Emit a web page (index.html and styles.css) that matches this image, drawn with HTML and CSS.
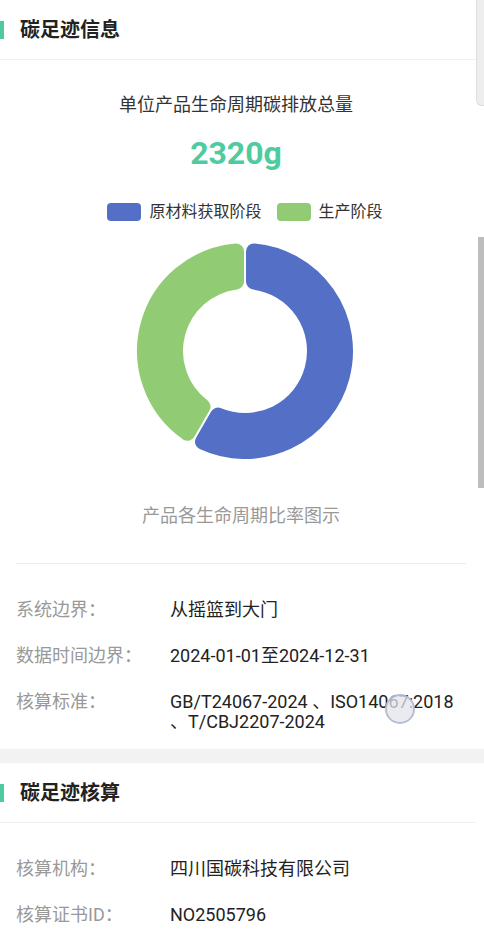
FILE: index.html
```html
<!DOCTYPE html>
<html lang="zh-CN">
<head>
<meta charset="utf-8">
<title>碳足迹信息</title>
<link rel="stylesheet" href="styles.css">
</head>
<body>
<div class="page">
  <section class="card">
    <div class="card-head"><span class="head-bar"></span><h2 class="head-title">碳足迹信息</h2></div>
    <div class="summary">
      <div class="summary-label">单位产品生命周期碳排放总量</div>
      <div class="summary-value">2320g</div>
      <div class="legend">
        <span class="legend-item"><span class="legend-swatch swatch-blue"></span>原材料获取阶段</span>
        <span class="legend-item"><span class="legend-swatch swatch-green"></span>生产阶段</span>
      </div>
      <div class="chart">
        <svg class="donut" width="220" height="220" viewBox="0 0 220 220">
          <path class="seg-blue" d="M118.99,10.41 A100,100 0 1 1 67.99,200.75 L83.08,174.62 A70,70 0 1 0 119.00,40.58 Z"/>
          <path class="seg-green" d="M52.41,191.75 A100,100 0 0 1 101.01,10.41 L101.00,40.58 A70,70 0 0 0 67.49,165.62 Z"/>
        </svg>
      </div>
      <div class="chart-caption">产品各生命周期比率图示</div>
    </div>
    <div class="info-list info-list-first">
      <div class="info-row"><span class="info-label">系统边界：</span><span class="info-value">从摇篮到大门</span></div>
      <div class="info-row"><span class="info-label">数据时间边界：</span><span class="info-value">2024-01-01至2024-12-31</span></div>
      <div class="info-row"><span class="info-label">核算标准：</span><span class="info-value">GB/T24067-2024 、ISO14067:2018<br>、T/CBJ2207-2024</span></div>
    </div>
  </section>
  <div class="band"></div>
  <section class="card">
    <div class="card-head"><span class="head-bar"></span><h2 class="head-title">碳足迹核算</h2></div>
    <div class="info-list info-list-second">
      <div class="info-row"><span class="info-label">核算机构：</span><span class="info-value">四川国碳科技有限公司</span></div>
      <div class="info-row"><span class="info-label">核算证书ID：</span><span class="info-value">NO2505796</span></div>
    </div>
  </section>
  <div class="scroll-track-top"></div>
  <div class="scroll-thumb"></div>
  <div class="touch-dot"></div>
</div>
</body>
</html>
```
FILE: styles.css
```css
html, body {
  margin: 0;
  padding: 0;
  background: #ffffff;
}
body {
  font-family: Roboto, "Noto Sans CJK SC", "Noto Sans", sans-serif;
  color: #222222;
  width: 484px;
  height: 949px;
  overflow: hidden;
}
.page {
  position: relative;
  width: 484px;
}
.card {
  background: #ffffff;
  width: 476px;
}
.card-head {
  height: 59px;
  display: flex;
  align-items: center;
  border-bottom: 1px solid #f0f0f0;
}
.head-bar {
  width: 4px;
  height: 18px;
  background: #4ec9a2;
  margin-right: 16px;
}
.head-title {
  margin: 0;
  font-size: 20px;
  font-weight: 700;
  color: #222222;
  line-height: 26px;
}
.summary {
  display: flex;
  flex-direction: column;
  align-items: center;
  padding-top: 32px;
}
.summary-label {
  font-size: 18px;
  line-height: 26px;
  color: #333333;
  margin-left: -4px;
}
.summary-value {
  font-size: 32px;
  font-weight: 700;
  line-height: 40px;
  color: #4ecb9f;
  margin-top: 15px;
  margin-left: -4px;
}
.legend {
  display: flex;
  gap: 15px;
  margin-top: 28px;
  margin-left: 14px;
  font-size: 16px;
  line-height: 22px;
  color: #333333;
}
.legend-item {
  display: flex;
  align-items: center;
  gap: 8px;
}
.legend-swatch {
  width: 34px;
  height: 18px;
  border-radius: 4px;
}
.swatch-blue { background: #5470c6; }
.swatch-green { background: #91cc75; }
.chart {
  margin-top: 18px;
  margin-left: 14px;
  width: 220px;
  height: 220px;
}
.donut { display: block; }
.seg-blue {
  fill: #5470c6;
  stroke: #5470c6;
  stroke-width: 16;
  stroke-linejoin: round;
}
.seg-green {
  fill: #91cc75;
  stroke: #91cc75;
  stroke-width: 16;
  stroke-linejoin: round;
}
.chart-caption {
  margin-top: 42px;
  font-size: 18px;
  line-height: 26px;
  color: #999999;
  margin-left: 6px;
}
.info-list {
  margin: 0 10px 0 16px;
  border-top: 1px solid #ececec;
  padding-top: 23px;
  padding-bottom: 4px;
}
.info-list-first {
  margin-top: 34px;
}
.info-list-second {
  border-top: none;
}
.info-row {
  display: flex;
  padding: 13px 0;
  font-size: 18px;
  line-height: 20px;
}
.info-label {
  width: 154px;
  flex: none;
  color: #999999;
}
.info-value {
  color: #222222;
}
.band {
  height: 14px;
  background: #f2f2f2;
}
.scroll-track-top {
  position: absolute;
  top: 0;
  right: 0;
  width: 7px;
  height: 105px;
  background: #eeeeee;
  border-left: 1px solid #dddddd;
  border-bottom: 1px solid #dddddd;
  border-bottom-left-radius: 6px;
}
.scroll-thumb {
  position: absolute;
  top: 237px;
  right: 0;
  width: 6px;
  height: 251px;
  background: #bdbdbd;
}
.touch-dot {
  position: absolute;
  left: 385px;
  top: 694px;
  width: 26px;
  height: 26px;
  border-radius: 50%;
  background: rgba(225, 228, 236, 0.75);
  border: 2px solid rgba(170, 180, 205, 0.8);
}
```
